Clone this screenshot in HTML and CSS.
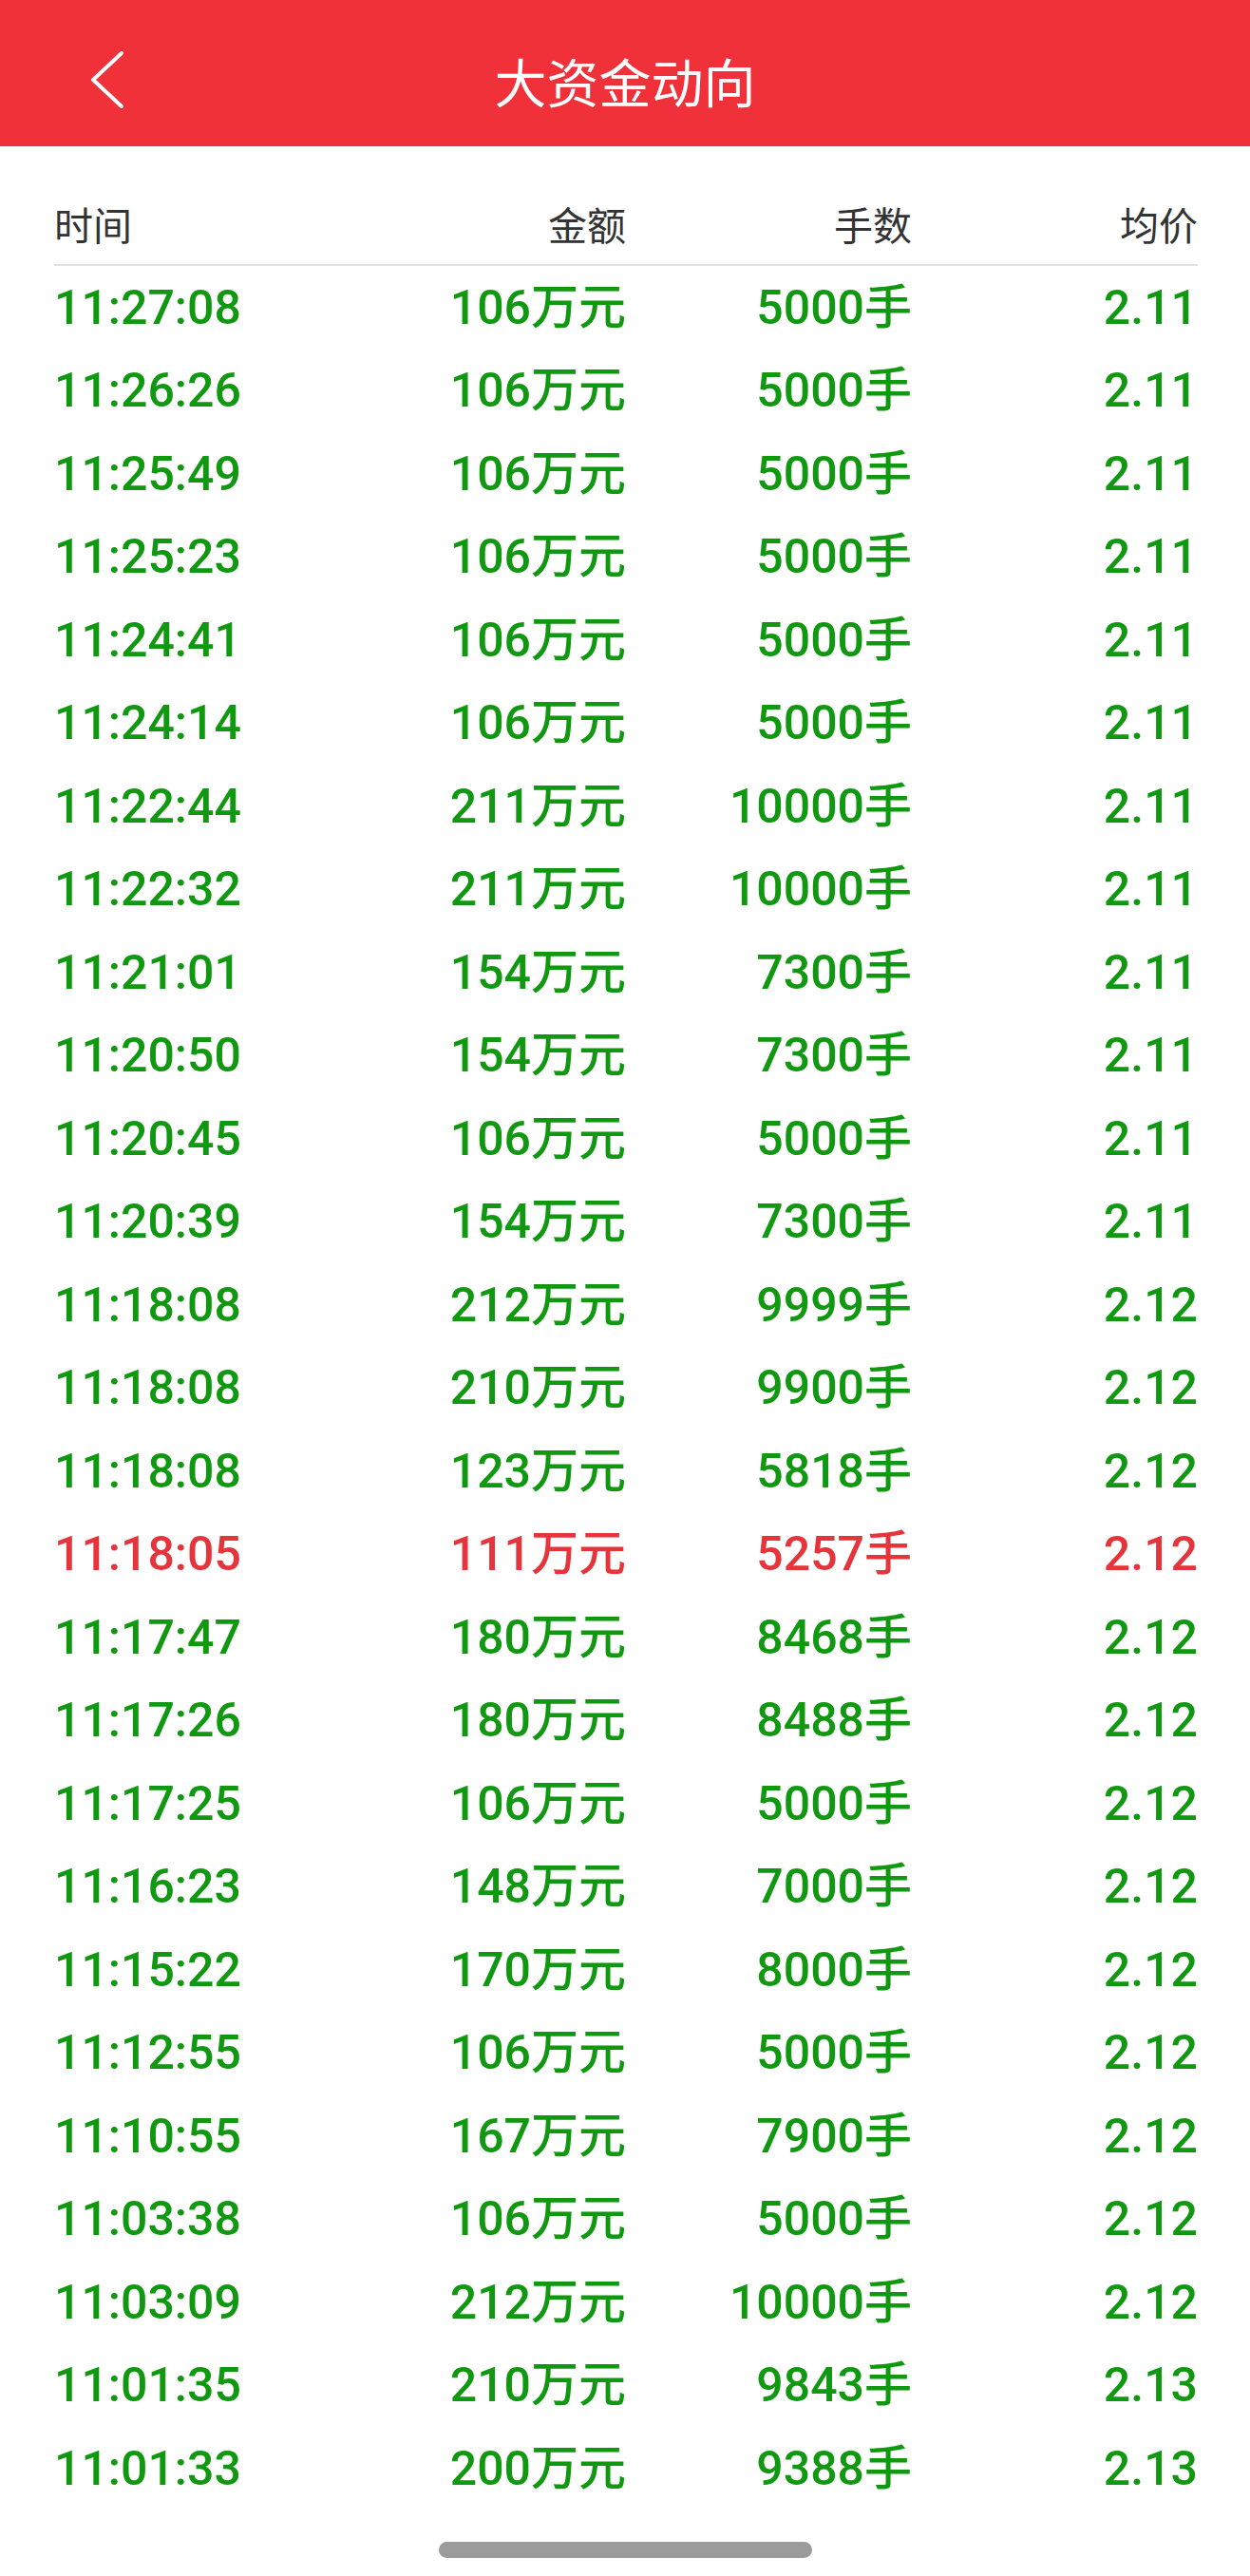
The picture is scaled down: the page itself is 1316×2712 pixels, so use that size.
FILE: index.html
```html
<!DOCTYPE html>
<html lang="zh-CN">
<head>
  <meta charset="UTF-8">
  <meta name="viewport" content="width=device-width, initial-scale=1.0">
  <title>大资金动向</title>
  <link rel="stylesheet" href="styles.css">
</head>
<body>

  <div class="navbar">
    <div class="nav-left">
      <svg class="back-icon" width="36" height="60" viewBox="0 0 36 60">
        <path d="M33 2 L3 30 L33 58" fill="none" stroke="#fff" stroke-width="4" stroke-linecap="round" stroke-linejoin="round"/>
      </svg>
    </div>
    <h1 class="nav-title">大资金动向</h1>
    <div class="nav-right"></div>
  </div>

  <div class="table">
    <div class="row thead">
      <div class="cell">时间</div>
      <div class="cell">金额</div>
      <div class="cell">手数</div>
      <div class="cell">均价</div>
    </div>

    <div class="row down"><div class="cell">11:27:08</div><div class="cell">106万元</div><div class="cell">5000手</div><div class="cell">2.11</div></div>
    <div class="row down"><div class="cell">11:26:26</div><div class="cell">106万元</div><div class="cell">5000手</div><div class="cell">2.11</div></div>
    <div class="row down"><div class="cell">11:25:49</div><div class="cell">106万元</div><div class="cell">5000手</div><div class="cell">2.11</div></div>
    <div class="row down"><div class="cell">11:25:23</div><div class="cell">106万元</div><div class="cell">5000手</div><div class="cell">2.11</div></div>
    <div class="row down"><div class="cell">11:24:41</div><div class="cell">106万元</div><div class="cell">5000手</div><div class="cell">2.11</div></div>
    <div class="row down"><div class="cell">11:24:14</div><div class="cell">106万元</div><div class="cell">5000手</div><div class="cell">2.11</div></div>
    <div class="row down"><div class="cell">11:22:44</div><div class="cell">211万元</div><div class="cell">10000手</div><div class="cell">2.11</div></div>
    <div class="row down"><div class="cell">11:22:32</div><div class="cell">211万元</div><div class="cell">10000手</div><div class="cell">2.11</div></div>
    <div class="row down"><div class="cell">11:21:01</div><div class="cell">154万元</div><div class="cell">7300手</div><div class="cell">2.11</div></div>
    <div class="row down"><div class="cell">11:20:50</div><div class="cell">154万元</div><div class="cell">7300手</div><div class="cell">2.11</div></div>
    <div class="row down"><div class="cell">11:20:45</div><div class="cell">106万元</div><div class="cell">5000手</div><div class="cell">2.11</div></div>
    <div class="row down"><div class="cell">11:20:39</div><div class="cell">154万元</div><div class="cell">7300手</div><div class="cell">2.11</div></div>
    <div class="row down"><div class="cell">11:18:08</div><div class="cell">212万元</div><div class="cell">9999手</div><div class="cell">2.12</div></div>
    <div class="row down"><div class="cell">11:18:08</div><div class="cell">210万元</div><div class="cell">9900手</div><div class="cell">2.12</div></div>
    <div class="row down"><div class="cell">11:18:08</div><div class="cell">123万元</div><div class="cell">5818手</div><div class="cell">2.12</div></div>
    <div class="row up"><div class="cell">11:18:05</div><div class="cell">111万元</div><div class="cell">5257手</div><div class="cell">2.12</div></div>
    <div class="row down"><div class="cell">11:17:47</div><div class="cell">180万元</div><div class="cell">8468手</div><div class="cell">2.12</div></div>
    <div class="row down"><div class="cell">11:17:26</div><div class="cell">180万元</div><div class="cell">8488手</div><div class="cell">2.12</div></div>
    <div class="row down"><div class="cell">11:17:25</div><div class="cell">106万元</div><div class="cell">5000手</div><div class="cell">2.12</div></div>
    <div class="row down"><div class="cell">11:16:23</div><div class="cell">148万元</div><div class="cell">7000手</div><div class="cell">2.12</div></div>
    <div class="row down"><div class="cell">11:15:22</div><div class="cell">170万元</div><div class="cell">8000手</div><div class="cell">2.12</div></div>
    <div class="row down"><div class="cell">11:12:55</div><div class="cell">106万元</div><div class="cell">5000手</div><div class="cell">2.12</div></div>
    <div class="row down"><div class="cell">11:10:55</div><div class="cell">167万元</div><div class="cell">7900手</div><div class="cell">2.12</div></div>
    <div class="row down"><div class="cell">11:03:38</div><div class="cell">106万元</div><div class="cell">5000手</div><div class="cell">2.12</div></div>
    <div class="row down"><div class="cell">11:03:09</div><div class="cell">212万元</div><div class="cell">10000手</div><div class="cell">2.12</div></div>
    <div class="row down"><div class="cell">11:01:35</div><div class="cell">210万元</div><div class="cell">9843手</div><div class="cell">2.13</div></div>
    <div class="row down"><div class="cell">11:01:33</div><div class="cell">200万元</div><div class="cell">9388手</div><div class="cell">2.13</div></div>
  </div>

  <div class="home-bar"></div>

</body>
</html>
```

FILE: styles.css
```css
body {
  font-family: Roboto, "Noto Sans CJK SC", sans-serif;
  background-color: #fff;
  margin: 0;
  padding: 0;
}

.navbar {
  height: 154px;
  box-sizing: border-box;
  padding-top: 14px;
  background-color: #f0313a;
  display: grid;
  grid-template-columns: 1fr auto 1fr;
  align-items: center;
}

.nav-left {
  display: flex;
  align-items: center;
  padding-left: 95px;
}

.back-icon {
  display: block;
}

.nav-title {
  margin: 0;
  font-family: "Noto Sans CJK SC", sans-serif;
  font-size: 55px;
  font-weight: 400;
  line-height: 1;
  color: #fff;
}

.table {
  padding: 37px 55px 0 57px;
}

.row {
  display: grid;
  grid-template-columns: repeat(4, 1fr);
  align-items: center;
  height: 87.5px;
  line-height: 60px;
}

.cell {
  text-align: right;
  white-space: nowrap;
}

.cell:first-child {
  text-align: left;
}

.thead {
  height: 87px;
  border-bottom: 2px solid #e2e2e2;
  font-family: "Noto Sans CJK SC", sans-serif;
  font-size: 41px;
  color: #333;
}

.down,
.up {
  font-size: 50px;
  font-weight: 500;
}

.down {
  color: #109810;
}

.up {
  color: #e5343c;
}

.home-bar {
  width: 393px;
  height: 17px;
  margin: 33px auto 0;
  border-radius: 9px;
  background-color: #9b9b9b;
}
```
